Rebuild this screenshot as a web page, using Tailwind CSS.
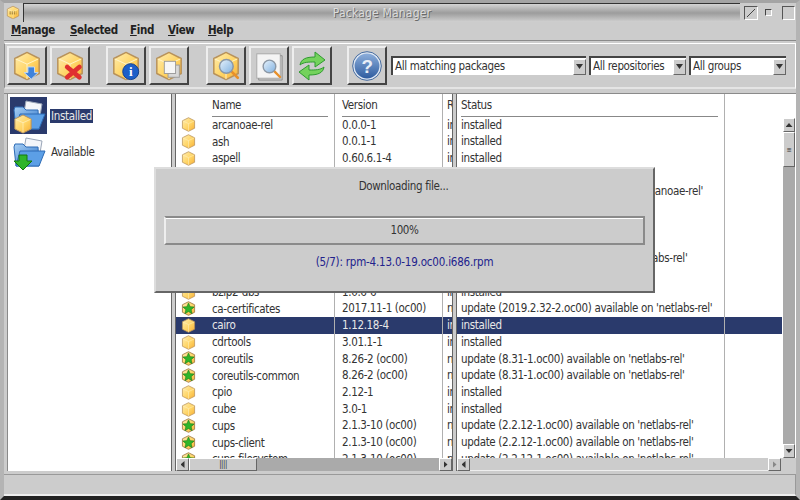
<!DOCTYPE html>
<html lang="en">
<head>
    <meta charset="UTF-8">
    <title>Package Manager</title>
    <script src="https://cdn.jsdelivr.net/npm/@tailwindcss/browser@4"></script>
</head>
<body class="bg-[#cccccc] font-['DejaVu_Sans_Condensed','DejaVu_Sans',sans-serif] text-[11.5px] tracking-[-0.35px] text-[#333333]">
    <!-- Shared icons -->
    <svg class="block w-0 h-0" aria-hidden="true">
        <defs>
            <linearGradient id="gold" x1="0" y1="0" x2="1" y2="1">
                <stop offset="0" stop-color="#ffedb0"/>
                <stop offset="0.55" stop-color="#ffd566"/>
                <stop offset="1" stop-color="#f7ae35"/>
            </linearGradient>
            <linearGradient id="blue" x1="0" y1="0" x2="1" y2="1">
                <stop offset="0" stop-color="#a8d0f5"/>
                <stop offset="1" stop-color="#2f74c8"/>
            </linearGradient>
            <linearGradient id="glass" x1="0" y1="0" x2="1" y2="1">
                <stop offset="0" stop-color="#e8f3fc"/>
                <stop offset="1" stop-color="#7fb0e0"/>
            </linearGradient>
            <linearGradient id="orb" x1="0" y1="0" x2="0" y2="1">
                <stop offset="0" stop-color="#8fb0dc"/>
                <stop offset="1" stop-color="#2c5a9e"/>
            </linearGradient>
            <symbol id="cube" viewBox="0 0 32 32">
                <polygon points="16,1.5 29,8 29,24 16,30.5 3,24 3,8" fill="url(#gold)" stroke="#b8925a" stroke-width="1.6" stroke-linejoin="round"/>
                <path d="M4 8.5 16 14 28 8.5M16 14V30" stroke="#fff4cc" stroke-width="1" fill="none"/>
            </symbol>
            <symbol id="star" viewBox="0 0 32 32">
                <polygon points="16,1.5 29,8 29,24 16,30.5 3,24 3,8" fill="url(#gold)" stroke="#a8834f" stroke-width="2" stroke-linejoin="round"/>
                <polygon points="16,4 19.5,12 28,12.8 21.6,18.4 23.6,27 16,22.5 8.4,27 10.4,18.4 4,12.8 12.5,12" fill="#2fb52a" stroke="#14760f" stroke-width="1.2"/>
            </symbol>
            <symbol id="lens" viewBox="0 0 32 32">
                <path d="M20 20 29 29" stroke="#e8902a" stroke-width="3.4" stroke-linecap="round"/>
                <circle cx="14" cy="14" r="9" fill="url(#glass)" stroke="#8c98a6" stroke-width="2"/>
            </symbol>
            <symbol id="folder" viewBox="0 0 36 36">
                <polygon points="15,3 31,6 28,24 12,20" fill="#f4f6fa" stroke="#9aa6b8"/>
                <path d="M3 12 4 9H12L15 12H27L28 31H5Z" fill="url(#blue)" stroke="#2d6bb5"/>
                <path d="M9 16H34L28 31H5Z" fill="#5c9fe6" stroke="#2d6bb5"/>
            </symbol>
        </defs>
    </svg>

    <div class="relative w-[800px] h-[500px] flex flex-col overflow-hidden bg-[#cccccc] border-t-[3px] border-x-[4px] border-b-[4px] border-t-[#a4a4a4] border-l-[#b4b4b4] border-r-[#b4b4b4] border-b-[#222222]">

        <!-- Title bar -->
        <div class="flex items-center h-[19px] shrink-0">
            <svg class="w-[14px] h-[15px] ml-[2px] mr-[3px]" viewBox="0 0 32 32"><use href="#cube"/><path d="M8 15H24M8 19H24" stroke="#7a5a20" stroke-width="2" stroke-dasharray="3 2"/></svg>
            <div class="w-[717px] h-[19px] flex items-center justify-center bg-gradient-to-b from-[#d4d4d4] via-[#9c9c9c] to-[#d0d0d0] border-t border-l border-[#333333] text-[12px] text-[#dcdcdc] tracking-[0.2px] [text-shadow:1px_1px_0_#6a6a6a]">Package Manager</div>
            <div class="flex-1 flex items-center justify-end pr-[1px]">
                <div class="w-[14px] h-[14px] border border-t-[#555555] border-l-[#555555] border-r-white border-b-white flex items-center justify-center">
                    <svg class="w-[10px] h-[10px]" viewBox="0 0 10 10"><path d="M1 9 9 1" stroke="#444444"/></svg>
                </div>
                <div class="w-[14px] h-[14px] ml-[3px] flex items-center justify-center"><div class="w-[7px] h-[7px] border border-t-[#444444] border-l-[#444444] border-r-white border-b-white"></div></div>
                <div class="w-[13px] h-[14px] ml-[7px] border border-t-[#555555] border-l-[#555555] border-r-white border-b-white"></div>
            </div>
        </div>

        <!-- Menu -->
        <div class="flex items-center h-[19px] shrink-0 font-bold text-[#222222] border-b border-[#8a8a8a] pl-[7px]">
            <span class="w-[59px]"><u>M</u>anage</span>
            <span class="w-[60px]"><u>S</u>elected</span>
            <span class="w-[38px]"><u>F</u>ind</span>
            <span class="w-[40px]"><u>V</u>iew</span>
            <span><u>H</u>elp</span>
        </div>

        <!-- Toolbar -->
        <div class="flex items-center h-[46px] mt-[2px] shrink-0 pl-[2px] border-t border-white border-l border-l-[#8a8a8a] border-b-2 border-b-[#e4e4e4] border-r border-r-white">
            <button class="w-[40px] h-[39px] flex items-center justify-center bg-[#cccccc] border-2 border-t-[#eeeeee] border-l-[#eeeeee] border-r-[#444444] border-b-[#444444]">
                <svg class="w-[30px] h-[30px]" viewBox="0 0 32 32"><use href="#cube"/><path d="M17 17H24V23H28L20.5 30 13 23H17Z" fill="#3f83dc" stroke="#c8dcf4"/></svg>
            </button>
            <button class="w-[40px] h-[39px] ml-[3px] flex items-center justify-center bg-[#cccccc] border-2 border-t-[#eeeeee] border-l-[#eeeeee] border-r-[#444444] border-b-[#444444]">
                <svg class="w-[30px] h-[30px]" viewBox="0 0 32 32"><use href="#cube"/><path d="M13 17 26 28M26 17 13 28" stroke="#e03030" stroke-width="5" stroke-linecap="round"/></svg>
            </button>
            <button class="w-[40px] h-[39px] ml-[16px] flex items-center justify-center bg-[#cccccc] border-2 border-t-[#eeeeee] border-l-[#eeeeee] border-r-[#444444] border-b-[#444444]">
                <svg class="w-[30px] h-[30px]" viewBox="0 0 32 32"><use href="#cube"/><circle cx="21" cy="22" r="8.5" fill="#1d5fc8" stroke="#123f8c"/><text x="21" y="27" text-anchor="middle" font-size="14" font-weight="bold" fill="#ffffff" font-family="Liberation Serif">i</text></svg>
            </button>
            <button class="w-[40px] h-[39px] ml-[3px] flex items-center justify-center bg-[#cccccc] border-2 border-t-[#eeeeee] border-l-[#eeeeee] border-r-[#444444] border-b-[#444444]">
                <svg class="w-[30px] h-[30px]" viewBox="0 0 32 32"><use href="#cube"/><rect x="15" y="15" width="12" height="13" fill="#d8d8d8" stroke="#9a9a9a"/><rect x="11" y="11" width="12" height="13" fill="#f6f6f6" stroke="#9a9a9a"/></svg>
            </button>
            <button class="w-[40px] h-[39px] ml-[17px] flex items-center justify-center bg-[#cccccc] border-2 border-t-[#eeeeee] border-l-[#eeeeee] border-r-[#444444] border-b-[#444444]">
                <svg class="w-[30px] h-[30px]" viewBox="0 0 32 32"><use href="#cube"/><svg x="5" y="5" width="26" height="26" viewBox="0 0 32 32"><use href="#lens"/></svg></svg>
            </button>
            <button class="w-[40px] h-[39px] ml-[3px] flex items-center justify-center bg-[#cccccc] border-2 border-t-[#eeeeee] border-l-[#eeeeee] border-r-[#444444] border-b-[#444444]">
                <svg class="w-[30px] h-[30px]" viewBox="0 0 32 32"><rect x="3" y="3" width="25" height="26" fill="#f4f4f4" stroke="#a8a8a8"/><path d="M28 5H30V31H5V29" fill="none" stroke="#8c8c8c"/><svg x="6" y="6" width="24" height="24" viewBox="0 0 32 32"><use href="#lens"/></svg></svg>
            </button>
            <button class="w-[40px] h-[39px] ml-[3px] flex items-center justify-center bg-[#cccccc] border-2 border-t-[#eeeeee] border-l-[#eeeeee] border-r-[#444444] border-b-[#444444]">
                <svg class="w-[32px] h-[32px]" viewBox="0 0 32 32"><path d="M4 15C5 9 10 7 19 7V2L29 10 19 17V12C12 12 8 12 4 15Z" fill="#74d25c" stroke="#2f9a30" stroke-linejoin="round"/><path d="M28 17C27 23 22 25 13 25V30L3 22 13 15V20C20 20 24 20 28 17Z" fill="#74d25c" stroke="#2f9a30" stroke-linejoin="round"/></svg>
            </button>
            <button class="w-[40px] h-[39px] ml-[15px] flex items-center justify-center bg-[#cccccc] border-2 border-t-[#eeeeee] border-l-[#eeeeee] border-r-[#444444] border-b-[#444444]">
                <svg class="w-[30px] h-[30px]" viewBox="0 0 32 32"><circle cx="16" cy="16" r="14" fill="url(#orb)" stroke="#dfe8f4" stroke-width="1.5"/><circle cx="16" cy="16" r="15.3" fill="none" stroke="#3f67a0"/><text x="16" y="23" text-anchor="middle" font-size="20" font-weight="bold" fill="#e8eef6" font-family="Liberation Sans">?</text></svg>
            </button>

            <!-- Filters -->
            <div class="flex items-center h-[19px] w-[195px] ml-[4px] bg-white border-t-2 border-l-2 border-[#444444] pl-[2px]">
                <span class="flex-1 whitespace-nowrap">All matching packages</span>
                <span class="w-[13px] h-[16px] bg-[#cccccc] border border-t-white border-l-white border-r-[#666666] border-b-[#666666] flex items-center justify-center"><span class="w-[7px] h-[5px] bg-[#333333] [clip-path:polygon(0_0,100%_0,50%_100%)]"></span></span>
            </div>
            <div class="flex items-center h-[19px] w-[97px] ml-[3px] bg-white border-t-2 border-l-2 border-[#444444] pl-[2px]">
                <span class="flex-1 whitespace-nowrap">All repositories</span>
                <span class="w-[13px] h-[16px] bg-[#cccccc] border border-t-white border-l-white border-r-[#666666] border-b-[#666666] flex items-center justify-center"><span class="w-[7px] h-[5px] bg-[#333333] [clip-path:polygon(0_0,100%_0,50%_100%)]"></span></span>
            </div>
            <div class="flex items-center h-[19px] w-[97px] ml-[3px] bg-white border-t-2 border-l-2 border-[#444444] pl-[2px]">
                <span class="flex-1 whitespace-nowrap">All groups</span>
                <span class="w-[13px] h-[16px] bg-[#cccccc] border border-t-white border-l-white border-r-[#666666] border-b-[#666666] flex items-center justify-center"><span class="w-[7px] h-[5px] bg-[#333333] [clip-path:polygon(0_0,100%_0,50%_100%)]"></span></span>
            </div>
        </div>

        <!-- Main panes -->
        <div class="flex h-[378px] mt-[4px] shrink-0 border-t border-[#8a8a8a]">
            <!-- Left tree -->
            <div class="w-[164px] h-[377px] ml-[3px] shrink-0 bg-white pl-[2px] pt-[3px] border-l border-[#8a8a8a]">
                <div class="flex items-center h-[37px]">
                    <div class="w-[37px] h-[37px] bg-[#2a3a6c] flex items-center justify-center">
                        <svg class="w-[36px] h-[36px]" viewBox="0 0 36 36"><use href="#folder"/><svg x="2" y="16" width="20" height="20" viewBox="0 0 32 32"><use href="#cube"/></svg></svg>
                    </div>
                    <span class="ml-[3px] px-[1px] h-[14px] leading-[14px] bg-[#2a3a6c] text-[#e8e8e8]">Installed</span>
                </div>
                <div class="flex items-center h-[35px] mt-[1px]">
                    <div class="w-[37px] h-[35px] flex items-center justify-center">
                        <svg class="w-[36px] h-[36px]" viewBox="0 0 36 36"><use href="#folder"/><path d="M8 20H16V26H21L12 35 3 26H8Z" fill="#2fb52a" stroke="#14760f"/></svg>
                    </div>
                    <span class="ml-[3px] px-[1px]">Available</span>
                </div>
            </div>
            <div class="w-[5px] shrink-0 bg-[#cccccc] border-x border-[#666666]"></div>

            <!-- Name / version pane -->
            <div class="w-[276px] shrink-0 flex flex-col">
                <div class="h-[364px] bg-white overflow-hidden">
                    <div class="flex h-[23px]">
                        <div class="w-[159px] border-r border-[#b0b0b0] pl-[36px]"><div class="h-[22px] leading-[23px] w-[116px] border-b border-[#888888] box-content">Name</div></div>
                        <div class="w-[108px] border-r border-[#b0b0b0] pl-[7px]"><div class="h-[22px] leading-[23px] w-[88px] border-b border-[#888888] box-content">Version</div></div>
                        <div class="flex-1 overflow-hidden pl-[4px] h-[22px] leading-[23px]">Repo</div>
                    </div>
                    <div id="pkg-rows" class="-mt-[0.5px]"></div>
                </div>
                <!-- Horizontal scrollbar -->
                <div class="flex items-center h-[13px] bg-[#aaaaaa]">
                    <span class="w-[13px] h-[13px] bg-[#cccccc] border border-t-white border-l-white border-r-[#666666] border-b-[#666666] flex items-center justify-center"><span class="w-[4px] h-[7px] bg-[#333333] [clip-path:polygon(100%_0,100%_100%,0_50%)]"></span></span>
                    <span class="w-[68px] h-[13px] bg-[#cccccc] border border-t-white border-l-white border-r-[#666666] border-b-[#666666] flex items-center justify-center text-[8px] leading-none tracking-[-0.5px]">||||</span>
                    <span class="flex-1"></span>
                    <span class="w-[13px] h-[13px] bg-[#cccccc] border border-t-white border-l-white border-r-[#666666] border-b-[#666666] flex items-center justify-center"><span class="w-[4px] h-[7px] bg-[#333333] [clip-path:polygon(0_0,100%_50%,0_100%)]"></span></span>
                </div>
            </div>
            <div class="w-[5px] shrink-0 bg-[#cccccc] border-x border-[#666666]"></div>

            <!-- Status pane -->
            <div class="flex-1 flex flex-col min-w-0">
                <div class="flex h-[364px] bg-white overflow-hidden">
                    <div class="w-[325px] shrink-0">
                        <div class="flex h-[23px]">
                            <div class="w-[268px] border-r border-[#b0b0b0] pl-[4px]"><div class="h-[22px] leading-[23px] w-[257px] border-b border-[#888888] box-content">Status</div></div>
                        </div>
                        <div id="status-rows" class="-mt-[0.5px]"></div>
                    </div>
                    <!-- Vertical scrollbar -->
                    <div class="flex-1 flex flex-col items-center pt-[24px]">
                        <span class="w-[12px] h-[14px] shrink-0 bg-[#cccccc] border border-t-white border-l-white border-r-[#666666] border-b-[#666666] flex items-center justify-center"><span class="w-[7px] h-[4px] bg-[#333333] [clip-path:polygon(50%_0,100%_100%,0_100%)]"></span></span>
                        <div class="w-[12px] flex-1 bg-[#aaaaaa] flex flex-col">
                            <span class="h-[35px] bg-[#cccccc] border border-t-white border-l-white border-r-[#666666] border-b-[#666666] flex items-center justify-center text-[7px] leading-[2px]">≡</span>
                        </div>
                        <span class="w-[12px] h-[14px] shrink-0 bg-[#cccccc] border border-t-white border-l-white border-r-[#666666] border-b-[#666666] flex items-center justify-center"><span class="w-[7px] h-[4px] bg-[#333333] [clip-path:polygon(0_0,100%_0,50%_100%)]"></span></span>
                    </div>
                </div>
                <div class="flex items-center h-[13px] bg-[#cccccc]">
                    <span class="w-[13px] h-[13px] bg-[#cccccc] border border-t-white border-l-white border-r-[#666666] border-b-[#666666] flex items-center justify-center"><span class="w-[4px] h-[7px] bg-[#333333] [clip-path:polygon(100%_0,100%_100%,0_50%)]"></span></span>
                    <span class="w-[298px] h-[13px] border-b border-[#eeeeee]"></span>
                    <span class="w-[13px] h-[13px] bg-[#cccccc] border border-t-white border-l-white border-r-[#666666] border-b-[#666666] flex items-center justify-center"><span class="w-[4px] h-[7px] bg-[#888888] [clip-path:polygon(0_0,100%_50%,0_100%)]"></span></span>
                </div>
            </div>
        </div>

        <!-- Status bar -->
        <div class="h-[22px] mt-[3px] shrink-0 border-t border-[#999999] border-b-2 border-b-[#eeeeee] border-r border-r-[#999999]"></div>

        <!-- Progress dialog -->
        <div class="absolute left-[150px] top-[164px] w-[501px] h-[126px] flex flex-col items-center bg-[#cccccc] border-2 border-t-[#dddddd] border-l-[#dddddd] border-r-[#666666] border-b-[#666666]">
            <div class="h-[14px] mt-[10px] leading-[14px] pr-[2px]">Downloading file...</div>
            <div class="w-[481px] h-[29px] mt-[23px] flex items-center justify-center border-2 border-t-[#8a8a8a] border-l-[#eeeeee] border-r-[#8a8a8a] border-b-[#8a8a8a] shadow-[inset_0_1px_0_#ffffff]">100%</div>
            <div class="mt-[9px] text-[#22228c] tracking-[-0.2px]">(5/7): rpm-4.13.0-19.oc00.i686.rpm</div>
        </div>
    </div>

    <script>
        // Package rows: name, version, status, has update
        const net = v => `update (${v}) available on 'netlabs-rel'`;
        const packages = [
            ['arcanoae-rel', '0.0.0-1', 'installed', false],
            ['ash', '0.0.1-1', 'installed', false],
            ['aspell', '0.60.6.1-4', 'installed', false],
            ['autoconf', '2.69-1', 'installed', false],
            ['automake', '1.15-1', "update (1.16.1-1.oc00) available on 'arcanoae-rel'", true],
            ['bash', '4.4-1', 'installed', false],
            ['binutils', '2.27-1', 'installed', false],
            ['bison', '3.0-1', 'installed', false],
            ['bzip2', '1.0.6-6', net('1.0.8-1.oc00'), true],
            ['bzip2-devel', '1.0.6-6', 'installed', false],
            ['bzip2-dbs', '1.0.6-6', 'installed', false],
            ['ca-certificates', '2017.11-1 (oc00)', net('2019.2.32-2.oc00'), true],
            ['cairo', '1.12.18-4', 'installed', false],
            ['cdrtools', '3.01.1-1', 'installed', false],
            ['coreutils', '8.26-2 (oc00)', net('8.31-1.oc00'), true],
            ['coreutils-common', '8.26-2 (oc00)', net('8.31-1.oc00'), true],
            ['cpio', '2.12-1', 'installed', false],
            ['cube', '3.0-1', 'installed', false],
            ['cups', '2.1.3-10 (oc00)', net('2.2.12-1.oc00'), true],
            ['cups-client', '2.1.3-10 (oc00)', net('2.2.12-1.oc00'), true],
            ['cups-filesystem', '2.1.3-10 (oc00)', net('2.2.12-1.oc00'), true],
        ];

        const pkgRows = document.getElementById('pkg-rows');
        const statusRows = document.getElementById('status-rows');
        packages.forEach(([name, version, status, update]) => {
            const selected = name === 'cairo';
            const rowClass = selected ? 'bg-[#2a3a6c] text-[#e8e8e8]' : '';
            pkgRows.insertAdjacentHTML('beforeend', `
                <div class="flex h-[16.72px] leading-[16px] ${rowClass}">
                    <div class="w-[159px] flex items-center border-r border-[#b0b0b0]">
                        <svg class="w-[15px] h-[15px] ml-[5px] mr-[16px] shrink-0" viewBox="0 0 32 32"><use href="${update ? '#star' : '#cube'}"/></svg>
                        <span>${name}</span>
                    </div>
                    <div class="w-[108px] border-r border-[#b0b0b0] pl-[7px]">${version}</div>
                    <div class="flex-1 overflow-hidden pl-[4px]">${update ? 'netlabs' : 'installed'}</div>
                </div>`);
            statusRows.insertAdjacentHTML('beforeend', `
                <div class="flex h-[16.72px] leading-[16px] ${rowClass}">
                    <div class="w-[268px] border-r border-[#b0b0b0] pl-[4px] whitespace-nowrap">${status}</div>
                </div>`);
        });
    </script>
</body>
</html>
